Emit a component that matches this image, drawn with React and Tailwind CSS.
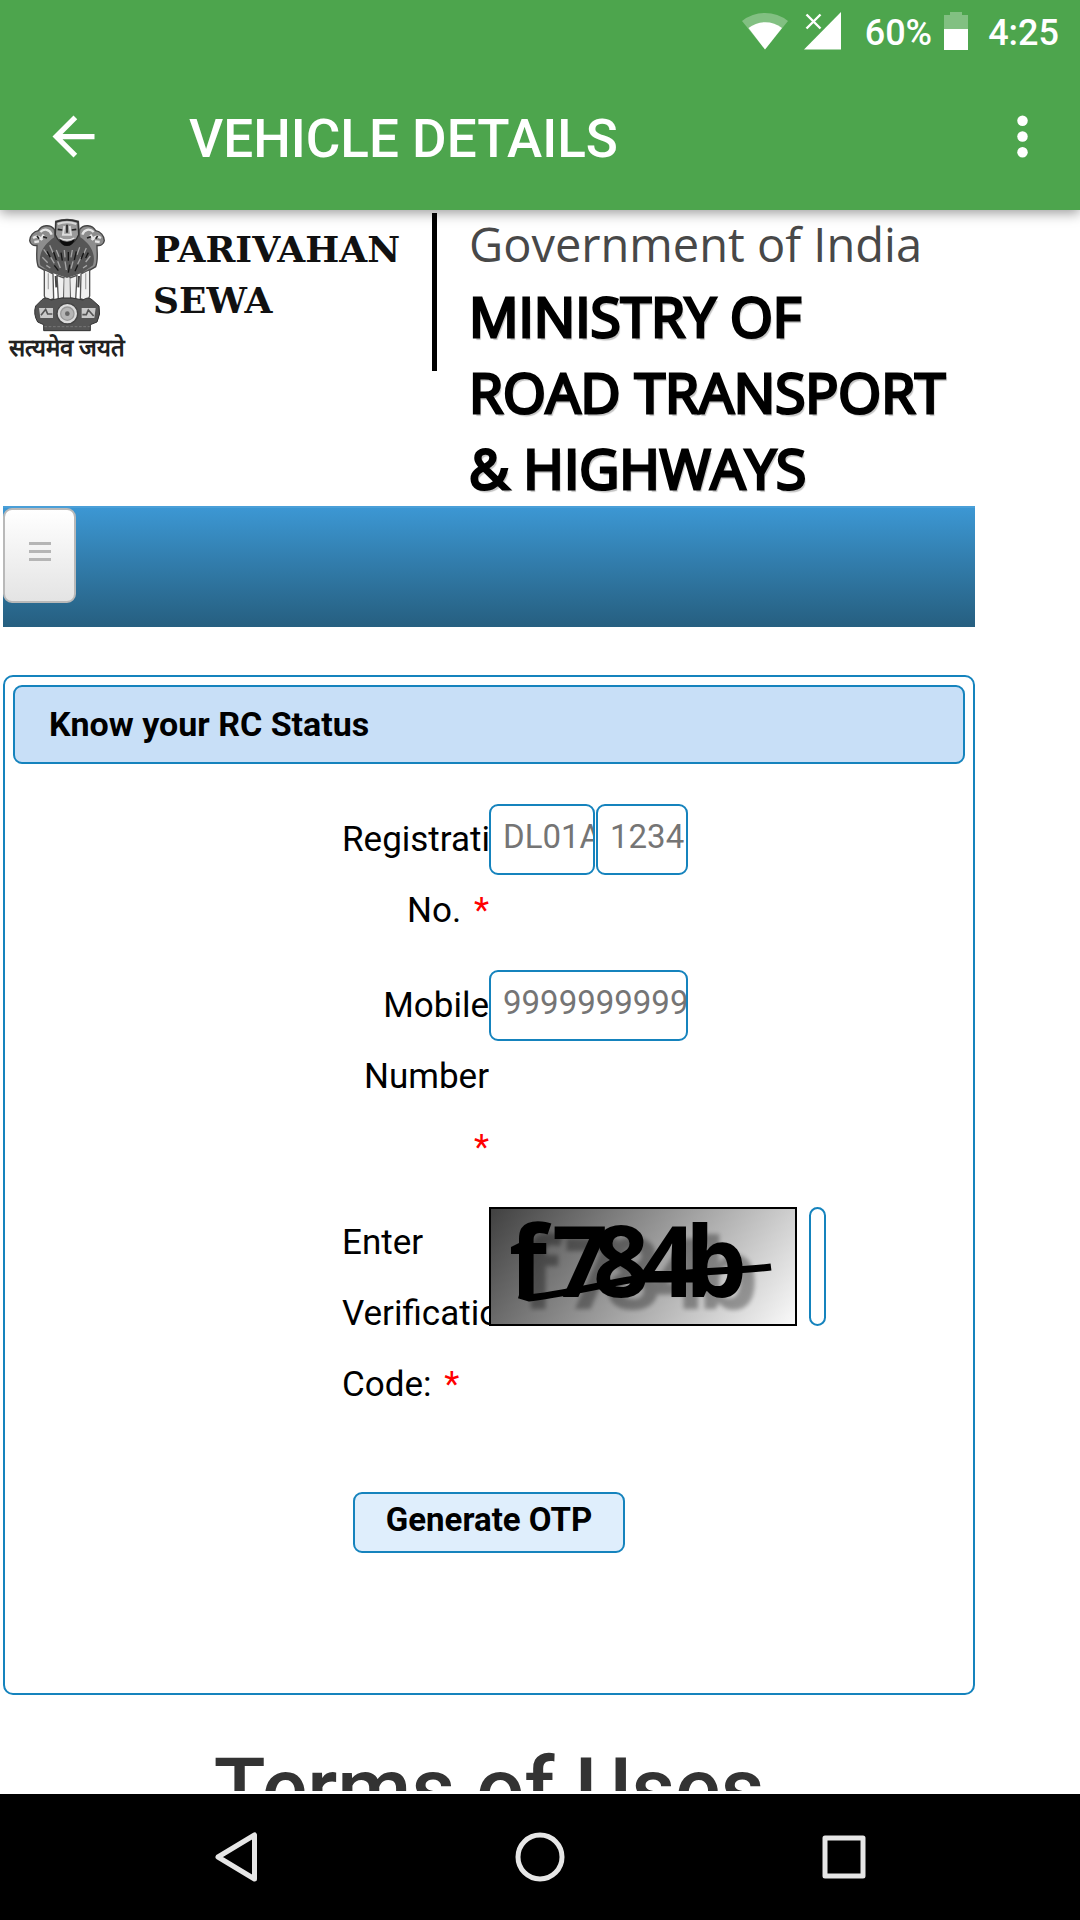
import React from "react";

const FIELD =
  "relative rounded-[9px] border-2 border-[#1583bd] bg-white pl-3 pb-1.5 text-[33px] leading-none text-black placeholder:text-[#757575] outline-none";
const LABEL = "w-[147px] shrink-0 text-[35px] leading-[71px] text-black";

function StatusBar() {
  return (
    <div className="flex h-[62px] items-center justify-end pr-[21px] text-[36px] font-medium leading-none">
      <svg className="mr-4 h-[38px] w-[46px]" viewBox="0 0 46 38" fill="#fff" aria-label="Wi-Fi">
        <path d="M0 9 A37 37 0 0 1 46 9 L23 37.500 Z" opacity=".3" />
        <path d="M6.500 16 A27 27 0 0 1 40 16 L23 37.500 Z" />
      </svg>
      <svg className="mr-6 h-[38px] w-[37px]" viewBox="0 0 37 38" aria-label="No signal">
        <path d="M37 0 V37.500 H0 Z" fill="#fff" />
        <path d="M2.500 2.500 L16.500 16.500 M16.500 2.500 L2.500 16.500" stroke="#fff" strokeWidth="2.400" />
      </svg>
      <span className="pt-1">60%</span>
      <svg className="ml-3 mr-5 h-[38px] w-[24px]" viewBox="0 0 24 38" fill="#fff" aria-label="Battery">
        <path d="M0 3 H6 V0 H18 V3 H24 V17 H0 Z" opacity=".3" />
        <path d="M0 17 H24 V38 H0 Z" />
      </svg>
      <span className="pt-1">4:25</span>
    </div>
  );
}

function AppBar() {
  return (
    <header className="relative z-20 shrink-0 bg-[#4da54d] text-white shadow-[0_3px_12px_rgba(0,0,0,0.4)]">
      <StatusBar />
      <div className="flex h-[148px] items-center pl-[42px] pr-[26px]">
        <button type="button" aria-label="Back">
          <svg className="size-[63px]" viewBox="0 0 24 24" fill="#fff">
            <path d="M20 11H7.830l5.590-5.590L12 4l-8 8 8 8 1.410-1.410L7.830 13H20v-2z" />
          </svg>
        </button>
        <h1 className="ml-[84px] flex-1 pt-1.5 text-[53px] font-medium leading-none">VEHICLE DETAILS</h1>
        <button type="button" aria-label="More options">
          <svg className="size-[63px]" viewBox="0 0 24 24" fill="#fff">
            <circle cx="12" cy="6" r="2" />
            <circle cx="12" cy="12" r="2" />
            <circle cx="12" cy="18" r="2" />
          </svg>
        </button>
      </div>
    </header>
  );
}

function Emblem() {
  return (
    <svg className="h-[114px] w-[76px]" viewBox="84 42 228 342" aria-label="State Emblem of India">
      {/* outer lions */}
      <path d="M160 76 C148 60 122 62 112 80 C98 82 86 96 86 110 C88 122 98 126 108 124 C108 150 104 168 112 188 L150 210 L165 130 Z" fill="#8d8d8d" stroke="#444" strokeWidth="4" />
      <path d="M236 76 C248 60 274 62 284 80 C298 82 310 96 310 110 C308 122 298 126 288 124 C288 150 292 168 284 188 L246 210 L231 130 Z" fill="#8d8d8d" stroke="#444" strokeWidth="4" />
      <path d="M118 84 C130 72 146 76 152 92 M96 102 C106 96 116 98 124 108 M100 114 l14 -2 M278 84 C266 72 250 76 244 92 M300 102 C290 96 280 98 272 108 M296 114 l-14 -2 M128 92 l-10 16 M268 92 l10 16" fill="none" stroke="#e6e6e6" strokeWidth="7" />
      <path d="M126 98 l12 4 M270 98 l-12 4 M108 96 l6 8 M290 96 l-6 8" stroke="#222" strokeWidth="5" />
      {/* central lion head and mane */}
      <path d="M162 50 Q198 38 234 50 L238 100 C268 120 286 150 276 184 L244 206 L198 222 L152 206 L118 184 C110 150 130 120 160 100 Z" fill="#565656" />
      <path d="M165 54 Q198 42 231 54 L233 92 Q222 120 198 122 Q174 120 163 92 Z" fill="#9a9a9a" stroke="#333" strokeWidth="4" />
      <path d="M170 60 Q198 50 226 60 M190 66 L186 92 H210 L206 66" fill="none" stroke="#ddd" strokeWidth="6" />
      <path d="M170 76 l14 2 M226 76 l-14 2 M198 62 v24" stroke="#222" strokeWidth="5" />
      <path d="M174 104 Q198 122 222 104 Q216 126 198 126 Q180 126 174 104 Z" fill="#0c0c0c" />
      <path d="M176 102 Q198 114 220 102" fill="none" stroke="#eee" strokeWidth="4" />
      <path d="M128 136 l12 16 M124 160 l16 16 M146 124 l10 22 M148 158 l12 20 M166 138 l8 20 M170 172 l8 20 M190 138 l2 22 M192 172 l4 26 M214 138 l-4 22 M216 172 l-6 22 M236 130 l-8 22 M240 160 l-10 20 M256 132 l-8 18 M268 156 l-14 18 M136 184 l12 8 M258 184 l-12 8" stroke="#a5a5a5" strokeWidth="4" />
      <path d="M138 142 l10 18 M158 144 l8 24 M180 146 l4 24 M202 144 v26 M226 142 l-6 26 M248 146 l-8 20 M262 146 l-8 16 M160 184 l12 16 M206 182 l-4 24 M230 184 l-8 18" stroke="#161616" strokeWidth="4" />
      {/* legs */}
      <path d="M130 196 L156 210 L158 284 L136 292 L130 276 Z M240 210 L266 196 L266 276 L260 292 L238 284 Z M168 214 L190 222 L188 282 L172 286 Z M206 222 L228 214 L224 286 L208 282 Z" fill="#f0f0f0" stroke="#555" strokeWidth="4" />
      <path d="M142 208 V256 M254 208 V256" stroke="#aaa" strokeWidth="4" />
      <path d="M190 222 H206 V282 H190 Z" fill="#e4e4e4" />
      <path d="M164 216 L166 250 M232 250 L234 216" stroke="#444" strokeWidth="6" />
      {/* abacus */}
      <path d="M122 288 Q132 276 150 288 L182 282 H214 L246 288 Q262 276 274 288 L294 306 Q300 330 288 354 L268 362 V380 H128 V362 L110 354 Q96 330 104 306 Z" fill="#555" stroke="#333" strokeWidth="3" />
      <path d="M114 312 H156 V342 H118 Z M242 312 H284 L280 342 H242 Z" fill="#c9c9c9" />
      <path d="M120 334 L134 316 L140 330 H154 M278 336 L262 318 L256 332 H244" fill="none" stroke="#555" strokeWidth="5" />
      <circle cx="199" cy="329" r="31" fill="#dcdcdc" stroke="#444" strokeWidth="4" />
      <circle cx="199" cy="329" r="20" fill="#b5b5b5" stroke="#999" strokeWidth="4" />
      <circle cx="199" cy="329" r="7" fill="#666" />
      <path d="M130 368 H266" stroke="#777" strokeWidth="3" strokeDasharray="8 5" />
    </svg>
  );
}

function MinistryHeader() {
  return (
    <div className="flex h-[296px] items-start">
      <div className="ml-1.5 flex w-[116px] shrink-0 flex-col items-center pt-2">
        <Emblem />
        <p className="whitespace-nowrap text-[24px] font-semibold leading-8 text-[#222]">सत्यमेव जयते</p>
      </div>
      <p className="ml-[28px] w-[279px] shrink-0 pt-[14px] font-['DejaVu_Serif'] text-[36px] font-bold leading-[51px] text-[#111]">
        PARIVAHAN
        <br />
        SEWA
      </p>
      <div className="mt-[3px] h-[158px] w-[5px] shrink-0 bg-black" />
      <div className="ml-[32px] font-['Open_Sans']">
        <p className="text-[47px] font-normal leading-[68px] text-[#484848]">Government of India</p>
        <h2 className="text-[55px] font-normal leading-[76px] text-black [-webkit-text-stroke:3px_#000] [text-shadow:2px_3px_1px_#c4c4c4]">
          MINISTRY OF
          <br />
          ROAD TRANSPORT
          <br />
          &amp; HIGHWAYS
        </h2>
      </div>
    </div>
  );
}

function Captcha() {
  const glyphs = [
    ["f", 20],
    ["7", 63],
    ["8", 104],
    ["4", 151],
    ["b", 196],
  ];
  const letters = glyphs.map(([char, x]) => (
    <text key={char} x={x} y="90">
      {char}
    </text>
  ));
  return (
    <svg className="relative h-[119px] w-[308px] shrink-0" viewBox="0 0 308 119" role="img" aria-label="Verification code f784b">
      <defs>
        <linearGradient id="captchaFill" x1="0" y1="0" x2="1.190" y2=".357">
          <stop offset="0" stopColor="#404040" />
          <stop offset="1" stopColor="#fafafa" />
        </linearGradient>
        <filter id="captchaBlur">
          <feGaussianBlur stdDeviation="2" />
        </filter>
      </defs>
      <rect x="1" y="1" width="306" height="117" fill="url(#captchaFill)" stroke="#000" strokeWidth="2" />
      <g className="font-['Open_Sans'] text-[98px] font-bold">
        <g transform="translate(12 12)" opacity=".32" filter="url(#captchaBlur)">
          {letters}
        </g>
        <g>{letters}</g>
      </g>
      <path d="M30 88 L40 91 C95 84 130 73 160 70 C205 64 250 64 282 60" fill="none" stroke="#000" strokeWidth="7" />
    </svg>
  );
}

function Star() {
  return <span className="ml-1 text-[#f00]">*</span>;
}

function RcStatusForm() {
  return (
    <form className="mt-12 rounded-[10px] border-2 border-[#1583bd] bg-white p-2 pb-[140px]" onSubmit={(e) => e.preventDefault()}>
      <h3 className="rounded-[9px] border-2 border-[#1583bd] bg-[#c8dff7] pl-[34px] text-[34px] font-bold leading-[75px] text-black">
        Know your RC Status
      </h3>
      <div className="flex flex-col gap-6 pl-[329px] pt-10">
        <div className="flex items-start">
          <label htmlFor="reg-series" className={`${LABEL} text-right`}>
            Registration No. <Star />
          </label>
          <input id="reg-series" placeholder="DL01AA" className={`${FIELD} h-[71px] w-[106px]`} />
          <input aria-label="Registration number digits" placeholder="1234" className={`${FIELD} ml-px h-[71px] w-[92px]`} />
        </div>
        <div className="flex items-start">
          <label htmlFor="mobile" className={`${LABEL} text-right`}>
            Mobile Number <Star />
          </label>
          <input id="mobile" type="tel" placeholder="9999999999" className={`${FIELD} h-[71px] w-[199px]`} />
        </div>
        <div className="flex items-start">
          <label htmlFor="captcha" className={LABEL}>
            Enter Verification Code: <Star />
          </label>
          <Captcha />
          <input id="captcha" className="ml-3 h-[119px] w-[17px] rounded-[9px] border-2 border-[#1583bd] bg-white outline-none" />
        </div>
      </div>
      <div className="mt-[72px] flex justify-center">
        <button type="submit" className="h-[61px] w-[272px] rounded-[9px] border-2 border-[#1583bd] bg-[#dfeefc] pb-1.5 text-[33px] font-bold leading-none text-black">
          Generate OTP
        </button>
      </div>
    </form>
  );
}

function SystemNav() {
  return (
    <nav className="grid h-[126px] shrink-0 grid-cols-3 items-center justify-items-center bg-black px-[84px]">
      <button type="button" aria-label="System back">
        <svg className="size-[54px]" viewBox="0 0 54 54" fill="none" stroke="#e6e6e6" strokeWidth="5" strokeLinejoin="round">
          <path d="M45.500 5 V49 L9 27 Z" />
        </svg>
      </button>
      <button type="button" aria-label="Home">
        <svg className="size-[54px]" viewBox="0 0 54 54" fill="none" stroke="#e6e6e6" strokeWidth="5">
          <circle cx="27" cy="27" r="22" />
        </svg>
      </button>
      <button type="button" aria-label="Recent apps">
        <svg className="size-[54px]" viewBox="0 0 54 54" fill="none" stroke="#e6e6e6" strokeWidth="5" strokeLinejoin="round">
          <path d="M8 8 H46 V46 H8 Z" />
        </svg>
      </button>
    </nav>
  );
}

export default function App() {
  return (
    <div className="flex h-screen flex-col overflow-hidden bg-white font-[Roboto,sans-serif]">
      <AppBar />
      <main className="mb-[3px] min-h-0 flex-1 overflow-hidden">
        <div className="ml-[3px] w-9/10">
          <MinistryHeader />
          <div className="h-[121px] border-t-2 border-[#4a9fd8] bg-linear-to-b from-[#3c97d3] to-[#265f80]">
            <button
              type="button"
              aria-label="Menu"
              className="flex h-[95px] w-[73px] items-center justify-center rounded-[9px] border-2 border-[#b9b9b9] bg-linear-to-b from-white to-[#e4e4e4] pb-2"
            >
              <span className="flex w-[22px] flex-col gap-[5px]">
                <span className="h-[3px] bg-[#b5b5b5]" />
                <span className="h-[3px] bg-[#b5b5b5]" />
                <span className="h-[3px] bg-[#b5b5b5]" />
              </span>
            </button>
          </div>
          <RcStatusForm />
          <h2 className="mt-11 text-center text-[85px] font-medium leading-[100px] text-[#333]">Terms of Uses</h2>
        </div>
      </main>
      <SystemNav />
    </div>
  );
}
